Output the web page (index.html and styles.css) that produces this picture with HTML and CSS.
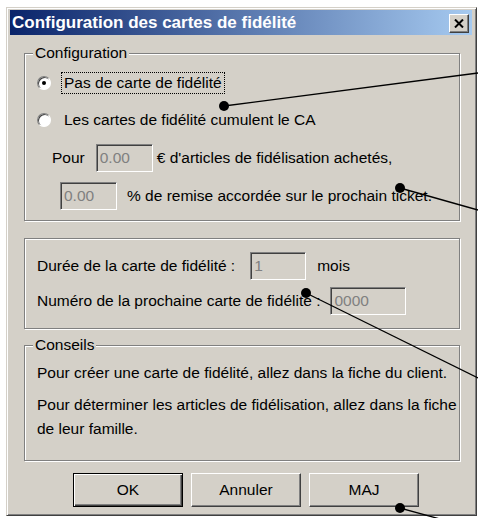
FILE: index.html
```html
<!DOCTYPE html>
<html lang="fr">
<head>
    <meta charset="UTF-8">
    <meta name="viewport" content="width=device-width, initial-scale=1.0">
    <title>Configuration des cartes de fidélité</title>
    <link rel="stylesheet" href="styles.css">
</head>
<body>
    <div class="window">
        <div class="titlebar">
            <span class="title">Configuration des cartes de fidélité</span>
            <button class="close-button" aria-label="Fermer">
                <svg width="10" height="9" viewBox="0 0 10 9">
                    <path d="M1 0.5 L9 8.5 M9 0.5 L1 8.5" stroke="#000" stroke-width="2" fill="none"/>
                </svg>
            </button>
        </div>

        <div class="group group-config">
            <span class="group-label">Configuration</span>

            <div class="radio-row">
                <span class="radio checked"></span>
                <span class="radio-text focused">Pas de carte de fidélité</span>
            </div>

            <div class="radio-row radio-row-second">
                <span class="radio"></span>
                <span class="radio-text">Les cartes de fidélité cumulent le CA</span>
            </div>

            <div class="field-row row-points">
                <span>Pour</span>
                <input class="textbox box-points" type="text" value="0.00" disabled>
                <span class="after-points">€ d'articles de fidélisation achetés,</span>
            </div>

            <div class="field-row row-discount">
                <input class="textbox box-discount" type="text" value="0.00" disabled>
                <span class="after-discount">% de remise accordée sur le prochain ticket.</span>
            </div>
        </div>

        <div class="group group-duration">
            <div class="field-row">
                <span>Durée de la carte de fidélité :</span>
                <input class="textbox box-months" type="text" value="1" disabled>
                <span class="after-months">mois</span>
            </div>

            <div class="field-row row-number">
                <span>Numéro de la prochaine carte de fidélité :</span>
                <input class="textbox box-number" type="text" value="0000" disabled>
            </div>
        </div>

        <div class="group group-tips">
            <span class="group-label">Conseils</span>
            <p>Pour créer une carte de fidélité, allez dans la fiche du client.</p>
            <p class="tip-second">Pour déterminer les articles de fidélisation, allez dans la fiche<br>de leur famille.</p>
        </div>

        <div class="button-row">
            <button class="button button-default">OK</button>
            <button class="button">Annuler</button>
            <button class="button">MAJ</button>
        </div>
    </div>

    <!-- callouts drawn over the screenshot -->
    <svg class="callouts" width="478" height="518" viewBox="0 0 478 518">
        <g stroke="#000" stroke-width="1.3">
            <line x1="224" y1="106" x2="478" y2="73"/>
            <line x1="400" y1="188" x2="478" y2="210"/>
            <line x1="306" y1="293" x2="478" y2="378"/>
            <line x1="400" y1="508" x2="440" y2="519"/>
        </g>
        <g fill="#000">
            <circle cx="224" cy="106" r="5"/>
            <circle cx="400" cy="188" r="5"/>
            <circle cx="306" cy="293" r="5"/>
            <circle cx="400" cy="508" r="5"/>
        </g>
    </svg>
</body>
</html>
```

FILE: styles.css
```css
body {
    margin: 0;
    padding: 7px 0 0 6px;
    width: 478px;
    height: 518px;
    box-sizing: border-box;
    position: relative;
    overflow: hidden;
    background-color: #ffffff;
    font-family: "Liberation Sans", Arial, sans-serif;
    font-size: 15.5px;
    color: #000000;
}

.window {
    width: 471px;
    height: 509px;
    box-sizing: border-box;
    background-color: #d4d0c8; /* classic button face */
    border: 1px solid;
    border-color: #d4d0c8 #404040 #404040 #d4d0c8;
    box-shadow: inset 1px 1px #ffffff, inset -1px -1px #808080;
    padding: 2px 4px 0 3px;
}

.titlebar {
    height: 25px;
    display: flex;
    align-items: center;
    justify-content: space-between;
    padding: 0 3px 0 2px;
    background: linear-gradient(to right, #0a246a, #a6caf0);
    color: #ffffff;
    font-weight: bold;
    font-size: 17px;
}

.close-button {
    width: 20px;
    height: 19px;
    margin-top: 2px;
    padding: 0;
    display: flex;
    align-items: center;
    justify-content: center;
    background-color: #d4d0c8;
    border: 1px solid;
    border-color: #ffffff #404040 #404040 #ffffff;
    box-shadow: inset -1px -1px #808080;
}

/* etched group box */
.group {
    position: relative;
    margin: 0 12px 0 14px;
    box-sizing: border-box;
    border: 1px solid #808080;
    box-shadow: inset 1px 1px #ffffff, 1px 1px #ffffff;
    padding-left: 12px;
}

.group-label {
    position: absolute;
    top: -10px;
    left: 8px;
    padding: 0 2px;
    line-height: 18px;
    background-color: #d4d0c8;
}

.group-config {
    margin-top: 18px;
    height: 168px;
    padding-top: 18px;
}

.group-duration {
    margin-top: 17px;
    height: 91px;
    padding-top: 13px;
}

.group-tips {
    margin-top: 16px;
    height: 116px;
    padding-top: 15px;
    line-height: 24px;
}

.group-tips p {
    margin: 0;
}

.group-tips .tip-second {
    margin-top: 8px;
}

.radio-row {
    display: flex;
    align-items: center;
    height: 22px;
}

.radio-row-second {
    margin-top: 15px;
}

.radio {
    position: relative;
    width: 14px;
    height: 14px;
    box-sizing: border-box;
    border-radius: 50%;
    background-color: #ffffff;
    border: 1px solid;
    border-color: #808080 #ffffff #ffffff #808080;
    box-shadow: inset 1px 1px #404040;
    margin-right: 10px;
}

.radio.checked::after {
    content: "";
    position: absolute;
    top: 4px;
    left: 4px;
    width: 4px;
    height: 4px;
    border-radius: 50%;
    background-color: #000000;
}

.radio-text {
    padding: 0 2px;
    line-height: 20px;
    border: 1px solid transparent;
}

.radio-text.focused {
    border: 1px dotted #000000;
}

.field-row {
    display: flex;
    align-items: center;
    height: 28px;
}

.row-points {
    margin-top: 13px;
    padding-left: 15px;
}

.row-discount {
    margin-top: 10px;
    padding-left: 23px;
}

.row-number {
    margin-top: 7px;
}

.textbox {
    -webkit-appearance: none;
    appearance: none;
    height: 28px;
    box-sizing: border-box;
    margin: 0;
    padding: 0 3px;
    font: inherit;
    color: #808080;
    background-color: #d4d0c8;
    border: 1px solid;
    border-color: #808080 #ffffff #ffffff #808080;
    box-shadow: inset 1px 1px #404040;
    outline: none;
}

.box-points {
    width: 57px;
    margin-left: 11px;
}

.box-discount {
    width: 57px;
}

.box-months {
    width: 56px;
    margin-left: 15px;
}

.box-number {
    width: 76px;
    margin-left: 10px;
}

.after-points {
    margin-left: 4px;
}

.after-discount {
    margin-left: 10px;
}

.after-months {
    margin-left: 11px;
}

.button-row {
    display: flex;
    gap: 8px;
    margin: 12px 0 0 63px;
}

.button {
    width: 110px;
    height: 34px;
    padding: 0;
    font: inherit;
    color: #000000;
    background-color: #d4d0c8;
    border: 1px solid;
    border-color: #ffffff #404040 #404040 #ffffff;
    box-shadow: inset -1px -1px #808080;
}

.button-default {
    border-color: #000000;
    box-shadow: inset 1px 1px #ffffff, inset -1px -1px #404040, inset -2px -2px #808080;
}

.callouts {
    position: absolute;
    top: 0;
    left: 0;
    pointer-events: none;
}
```
